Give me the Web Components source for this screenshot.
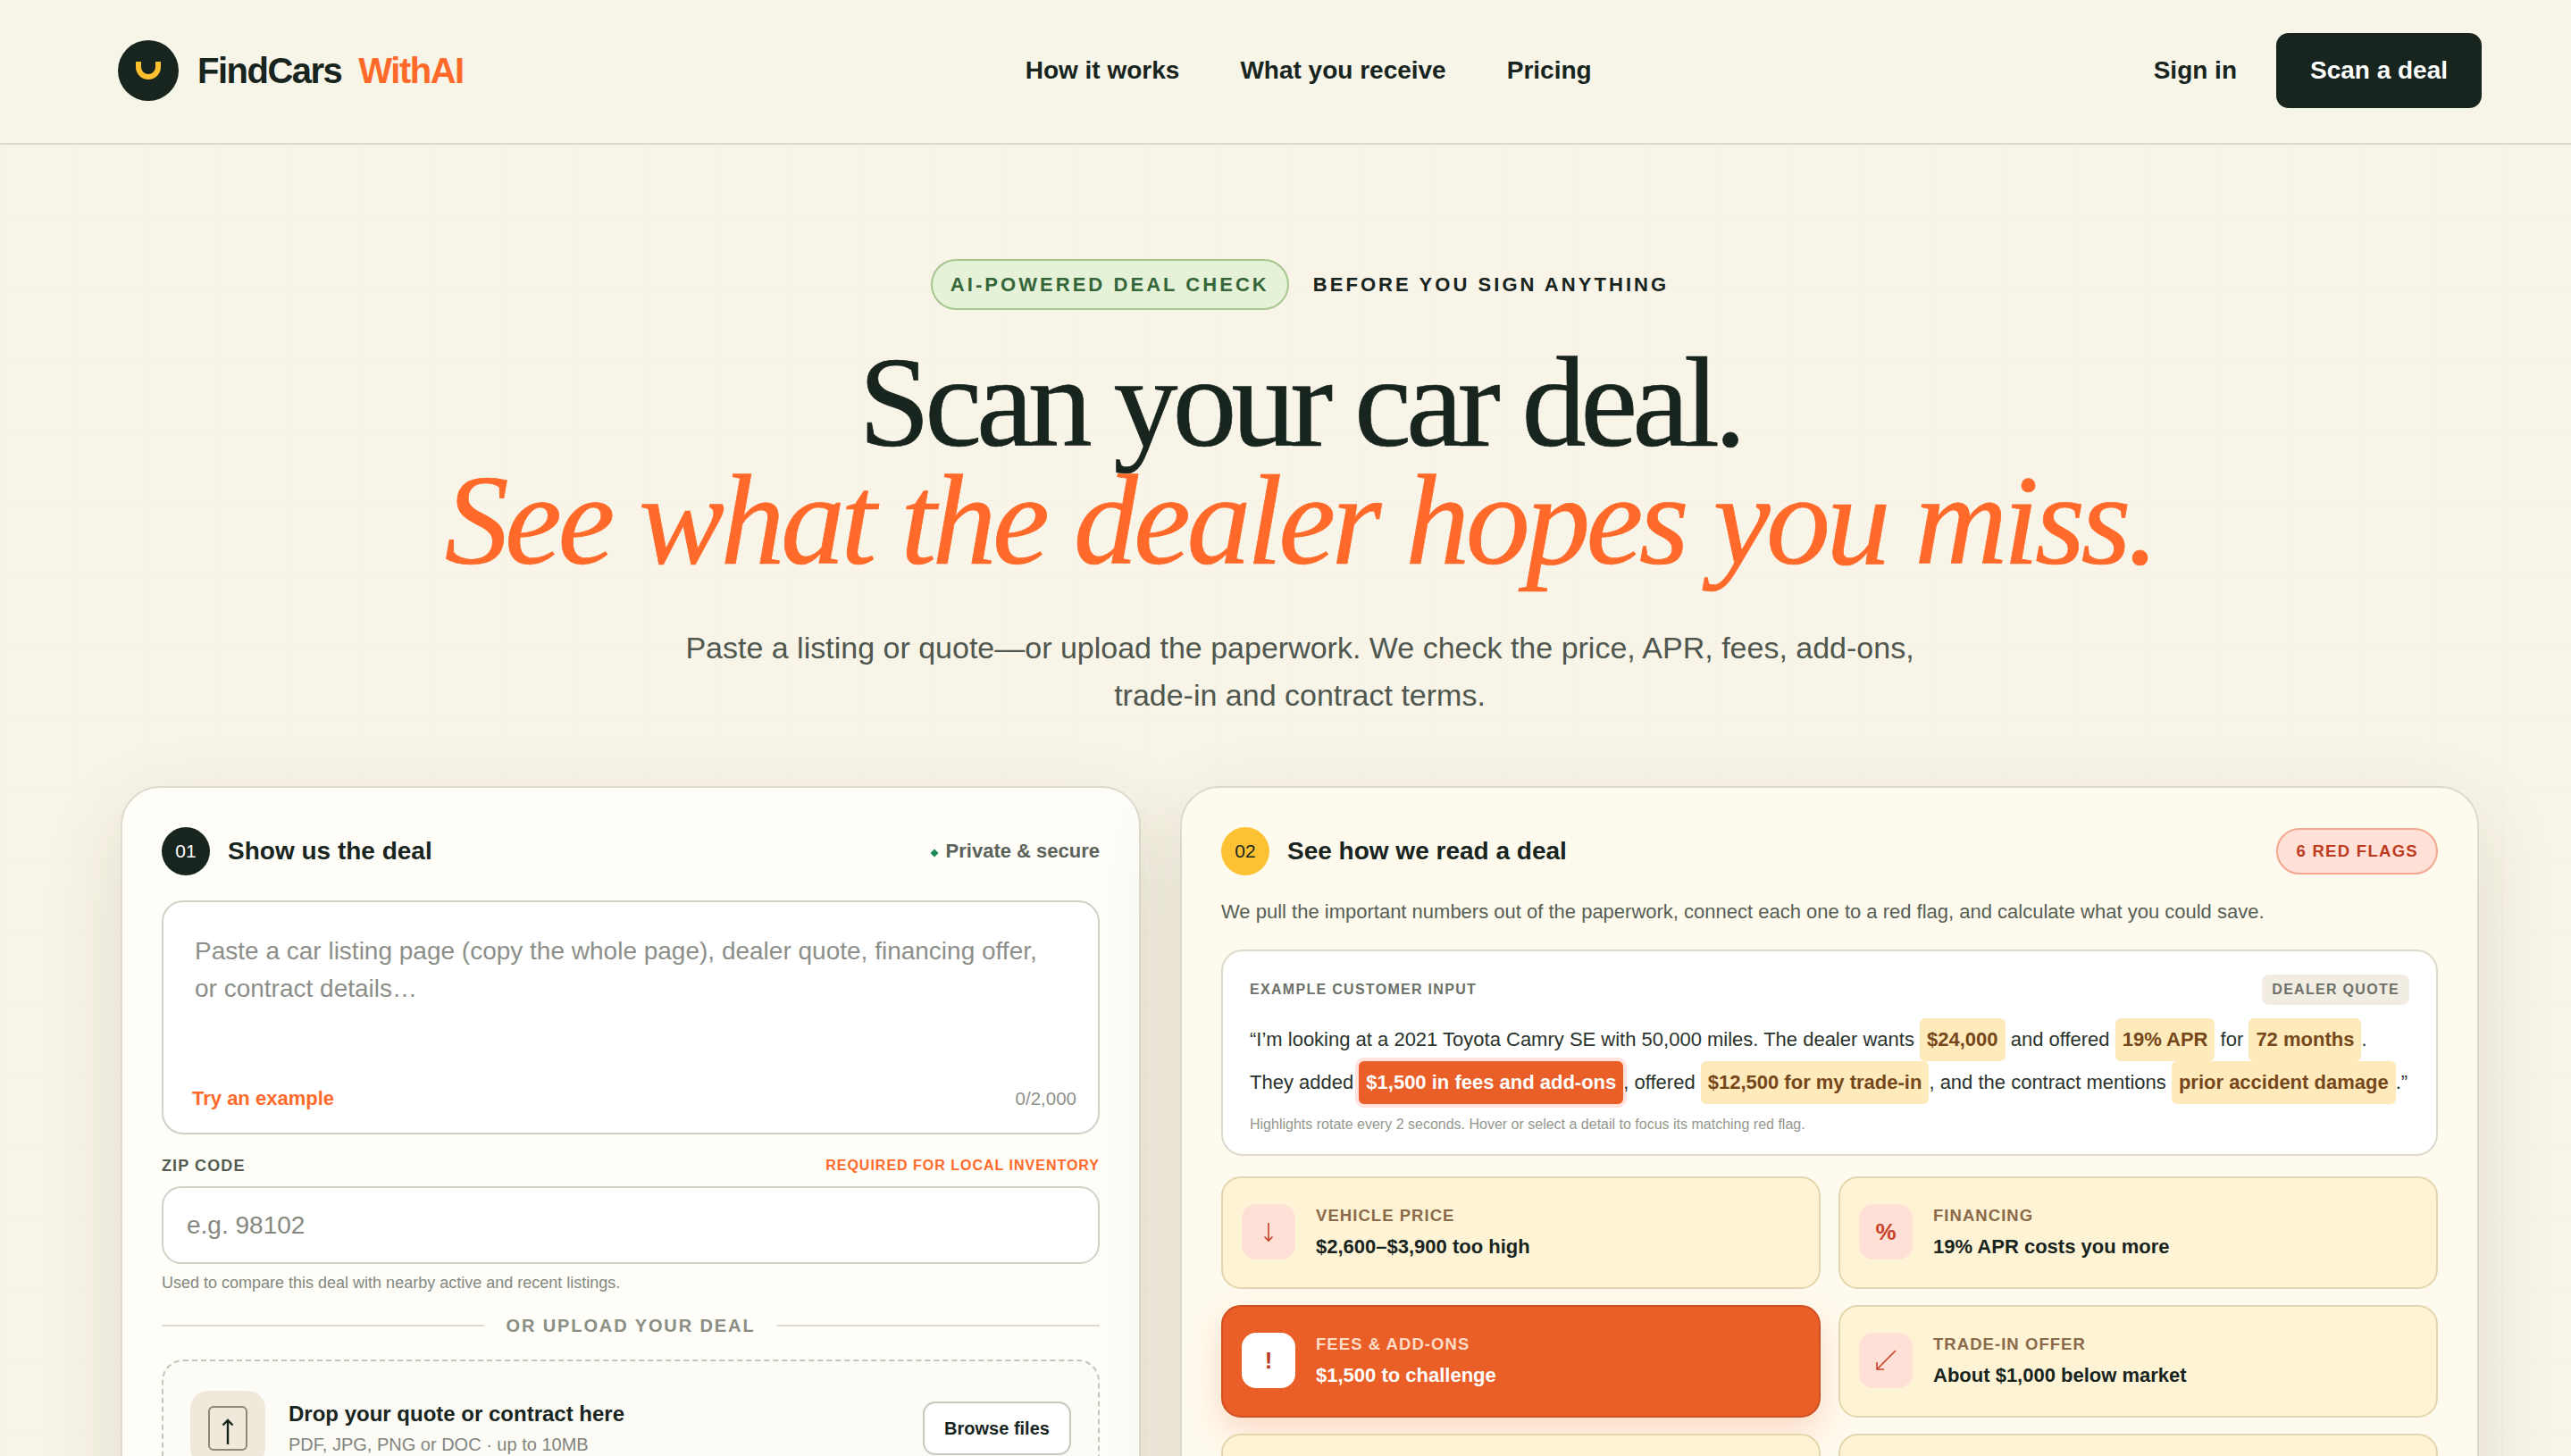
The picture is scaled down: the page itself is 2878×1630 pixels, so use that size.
<!DOCTYPE html>
<html lang="en">
<head>
<meta charset="utf-8">
<title>FindCars WithAI</title>
<style>
html, body { margin: 0; height: 1630px; overflow: hidden; }
body {
  font-family: "Liberation Sans", Arial, sans-serif;
  color: #18241e;
  background-color: #f8f4e8;
  background-image:
    linear-gradient(rgba(120,110,70,.012) 2px, transparent 2px),
    linear-gradient(90deg, rgba(120,110,70,.012) 2px, transparent 2px);
  background-size: 80px 80px;
}
</style>
</head>
<body>
<site-header></site-header>
<hero-intro></hero-intro>
<deal-columns>
  <deal-form></deal-form>
  <deal-reading></deal-reading>
</deal-columns>

<script>
const ACCENT = "#ff6a2b";

class SiteHeader extends HTMLElement {
  constructor() {
    super();
    this.attachShadow({ mode: "open" });
    this.shadowRoot.innerHTML = `<style>
:host { display: flex; box-sizing: border-box; height: 162px; padding: 0 100px 2px 132px; align-items: center; justify-content: space-between; border-bottom: 2px solid #dcd9cb; background: #f7f4e8; }
.logo { display: flex; align-items: center; font-size: 40px; font-weight: 700; letter-spacing: -1.5px; }
.logo svg { margin-right: 21px; }
.logo span { color: ${ACCENT}; margin-left: 19px; }
nav { display: flex; gap: 68px; font-size: 28px; font-weight: 700; }
.right { display: flex; align-items: center; gap: 44px; font-size: 28px; font-weight: 700; }
.cta { background: #18241e; color: #fff; width: 230px; height: 84px; border-radius: 14px; display: flex; align-items: center; justify-content: center; }
</style>
<div class="logo">
  <svg width="68" height="68" viewBox="0 0 68 68"><circle cx="34" cy="34" r="34" fill="#18241e"/><path d="M23 24v6a11 11 0 0 0 22 0v-6" fill="none" stroke="#fcc02e" stroke-width="6"/></svg>
  FindCars<span>WithAI</span>
</div>
<nav><div>How it works</div><div>What you receive</div><div>Pricing</div></nav>
<div class="right"><div>Sign in</div><div class="cta">Scan a deal</div></div>`;
  }
}

class HeroIntro extends HTMLElement {
  constructor() {
    super();
    this.attachShadow({ mode: "open" });
    this.shadowRoot.innerHTML = `<style>
:host { display: block; box-sizing: border-box; height: 718px; padding: 128px 100px 0 132px; text-align: center; }
.eyebrow { display: flex; justify-content: center; align-items: center; gap: 27px; font-size: 22px; font-weight: 700; letter-spacing: 3.05px; }
.pill { box-sizing: border-box; height: 57px; padding: 0 20px; border: 2px solid #a5c78f; border-radius: 29px; background: #e6f2d8; color: #35663a; display: flex; align-items: center; }
h1 { margin: 38px 0 0; font-family: "Liberation Serif", "Times New Roman", serif; font-weight: 400; font-size: 144px; line-height: 132px; letter-spacing: -6.1px; -webkit-text-stroke: .7px currentColor; }
h1 em { display: block; color: ${ACCENT}; letter-spacing: -4.6px; }
p { margin: 50px 0 0; font-size: 34px; line-height: 53px; color: #4f574f; }
</style>
<div class="eyebrow"><div class="pill">AI-POWERED DEAL CHECK</div><div>BEFORE YOU SIGN ANYTHING</div></div>
<h1>Scan your car deal.<em>See what the dealer hopes you miss.</em></h1>
<p>Paste a listing or quote—or upload the paperwork. We check the price, APR, fees, add-ons,<br>trade-in and contract terms.</p>`;
  }
}

class DealColumns extends HTMLElement {
  constructor() {
    super();
    this.attachShadow({ mode: "open" });
    this.shadowRoot.innerHTML = `<style>
:host { display: grid; grid-template-columns: 1142px 1454px; column-gap: 44px; padding-left: 135px; align-items: start; }
</style><slot></slot>`;
  }
}

class StepHead extends HTMLElement {
  constructor() {
    super();
    this.attachShadow({ mode: "open" });
    this.shadowRoot.innerHTML = `<style>
:host { display: flex; height: 54px; align-items: center; }
.num { box-sizing: border-box; width: 54px; height: 54px; border-radius: 50%; display: flex; align-items: center; justify-content: center; font-size: 21px; background: #18241e; color: #fff; margin-right: 20px; flex: none; }
:host([tone="yellow"]) .num { background: #fcc233; color: #18241e; }
.title { font-size: 28px; font-weight: 700; flex: 1; }
</style>
<div class="num"></div><div class="title"><slot></slot></div><slot name="aside"></slot>`;
  }
  connectedCallback() {
    this.shadowRoot.querySelector(".num").textContent = this.getAttribute("num");
  }
}

class DealForm extends HTMLElement {
  constructor() {
    super();
    this.attachShadow({ mode: "open" });
    this.shadowRoot.innerHTML = `<style>
:host { display: block; box-sizing: border-box; height: 900px; padding: 44px 44px 0; background: #fefdf8; border: 2px solid #dcdacd; border-radius: 44px; box-shadow: 0 30px 90px rgba(70,60,20,.13); }
.private { font-size: 22px; font-weight: 700; color: #5b625a; display: flex; align-items: center; gap: 9px; }
.private i { width: 8px; height: 8px; background: #1b8a57; transform: rotate(45deg) scale(.8); margin-top: 4px; }
.paste { box-sizing: border-box; height: 262px; margin-top: 28px; padding: 34px 34px 0 35px; background: #fff; border: 2px solid #d2d1c8; border-radius: 24px; display: flex; flex-direction: column; font-size: 28px; line-height: 42px; color: #8c8f89; }
.paste-foot { margin-top: auto; height: 52px; margin-left: -3px; margin-right: -10px; display: flex; justify-content: space-between; font-size: 22px; line-height: 28px; }
.paste-foot b { color: ${ACCENT}; }
.paste-foot span { font-size: 20.500px; color: #8f928b; }
.zip-row { display: flex; justify-content: space-between; align-items: center; margin-top: 24px; height: 22px; font-size: 18px; font-weight: 700; letter-spacing: 1.1px; color: #525a52; }
.zip-row span { color: ${ACCENT}; font-size: 16px; letter-spacing: 1px; }
.zip { box-sizing: border-box; height: 87px; margin-top: 12px; padding-left: 26px; background: #fff; border: 2px solid #d2d1c8; border-radius: 22px; display: flex; align-items: center; font-size: 28px; color: #85887f; }
.hint { margin-top: 9px; font-size: 18px; line-height: 24px; color: #84887f; }
.or { display: flex; align-items: center; gap: 24px; margin-top: 24px; height: 24px; font-size: 20px; font-weight: 700; letter-spacing: 1.9px; color: #8a8e84; white-space: nowrap; }
.or::before, .or::after { content: ""; flex: 1; height: 2px; background: #dddbd0; }
.drop { box-sizing: border-box; height: 160px; margin-top: 26px; padding: 33px 30px 0 30px; background: #fcfbf6; border: 2px dashed #c6c5bb; border-radius: 24px; display: flex; align-items: flex-start; }
.icon { flex: none; width: 84px; height: 84px; border-radius: 20px; background: #f0e8da; display: flex; align-items: center; justify-content: center; margin-right: 26px; }
.drop-text { flex: 1; padding-top: 10px; }
.drop-text b { display: block; font-size: 24px; line-height: 32px; }
.drop-text span { display: block; margin-top: 5px; font-size: 20px; line-height: 26px; color: #82857d; }
.browse { box-sizing: border-box; width: 166px; height: 60px; margin-top: 12px; background: #fff; border: 2px solid #c9c8c0; border-radius: 14px; display: flex; align-items: center; justify-content: center; font-size: 20px; font-weight: 700; color: #18241e; }
</style>
<step-head num="01">Show us the deal<div class="private" slot="aside"><i></i>Private &amp; secure</div></step-head>
<div class="paste">
  <div>Paste a car listing page (copy the whole page), dealer quote, financing offer,<br>or contract details…</div>
  <div class="paste-foot"><b>Try an example</b><span>0/2,000</span></div>
</div>
<div class="zip-row"><div>ZIP CODE</div><span>REQUIRED FOR LOCAL INVENTORY</span></div>
<div class="zip">e.g. 98102</div>
<div class="hint">Used to compare this deal with nearby active and recent listings.</div>
<div class="or">OR UPLOAD YOUR DEAL</div>
<div class="drop">
  <div class="icon">
    <svg width="44" height="50" viewBox="0 0 44 50" fill="none">
      <rect x="1" y="1" width="42" height="48" rx="5" stroke="#8e8676" stroke-width="2"/>
      <path d="M22 43V16M16.500 21.500L22 16l5.500 5.500" stroke="#18241e" stroke-width="2.400"/>
    </svg>
  </div>
  <div class="drop-text"><b>Drop your quote or contract here</b><span>PDF, JPG, PNG or DOC · up to 10MB</span></div>
  <div class="browse">Browse files</div>
</div>`;
  }
}

class FlagCard extends HTMLElement {
  constructor() {
    super();
    this.attachShadow({ mode: "open" });
    this.shadowRoot.innerHTML = `<style>
:host { display: flex; box-sizing: border-box; height: 126px; padding: 0 21px; align-items: center; gap: 23px; background: #fff3d6; border: 2px solid #e3d5ac; border-radius: 22px; }
:host([active]) { background: #ea5e27; border-color: #cf4f20; box-shadow: 0 16px 36px rgba(234,94,39,.2); }
.icon { flex: none; width: 60px; height: 62px; margin-top: -2px; border-radius: 16px; background: #ffe0d6; color: #c7422a; display: flex; align-items: center; justify-content: center; font-size: 26px; font-weight: 700; }
:host([active]) .icon { background: #fff; color: #b93a22; }
.label { font-size: 18.500px; font-weight: 700; letter-spacing: 1.05px; line-height: 22px; color: #8a6a48; }
:host([active]) .label { color: #ffdcc6; }
.value { margin-top: 10px; font-size: 22px; font-weight: 700; line-height: 28px; color: #18241e; }
:host([active]) .value { color: #fff; }
</style>
<div class="icon"><slot name="icon"></slot></div>
<div class="body">
  <div class="label"><slot name="label"></slot></div>
  <div class="value"><slot name="value"></slot></div>
</div>`;
  }
}

class DealReading extends HTMLElement {
  constructor() {
    super();
    this.attachShadow({ mode: "open" });
    this.shadowRoot.innerHTML = `<style>
:host { display: block; box-sizing: border-box; height: 1000px; padding: 44px 44px 0; background: #fffaee; border: 2px solid #dcdacd; border-radius: 44px; box-shadow: 0 30px 90px rgba(70,60,20,.13); }
.flags { box-sizing: border-box; height: 52px; padding: 0 20px; border: 2px solid #f2a78f; border-radius: 26px; background: #ffe1d7; color: #bd3b20; display: flex; align-items: center; font-size: 18.500px; font-weight: 700; letter-spacing: 1.3px; }
.lead { margin-top: 26px; font-size: 22px; line-height: 30px; color: #565e54; }
.sample { box-sizing: border-box; height: 231px; margin-top: 27px; padding: 26px 30px 0; background: #fff; border: 2px solid #dcdacd; border-radius: 24px; }
.sample-top { display: flex; justify-content: space-between; align-items: center; height: 34px; font-size: 16px; font-weight: 700; letter-spacing: 1.3px; color: #6c7067; }
.sample-top span { display: flex; align-items: center; height: 34px; padding: 0 11px; border-radius: 8px; background: #f1ede3; }
.quote { margin-top: 15px; font-size: 22px; line-height: 48px; white-space: nowrap; color: #2a332c; }
mark { display: inline-block; height: 48px; padding: 0 8px; background: #ffeabc; color: #75471a; font-weight: 700; border-radius: 6px; }
mark.on { background: #ea5e27; color: #fff; box-shadow: 0 0 0 4px #ffe3dc; }
.note { margin-top: 12px; font-size: 16px; line-height: 22px; color: #94978e; }
.grid { display: grid; grid-template-columns: 671px 671px; gap: 18px 20px; margin-top: 23px; }
svg { display: block; }
</style>
<step-head num="02" tone="yellow">See how we read a deal<div class="flags" slot="aside">6 RED FLAGS</div></step-head>
<div class="lead">We pull the important numbers out of the paperwork, connect each one to a red flag, and calculate what you could save.</div>
<div class="sample">
  <div class="sample-top"><div>EXAMPLE CUSTOMER INPUT</div><span>DEALER QUOTE</span></div>
  <div class="quote">“I’m looking at a 2021 Toyota Camry SE with 50,000 miles. The dealer wants <mark>$24,000</mark> and offered <mark>19% APR</mark> for <mark>72 months</mark>.<br>They added <mark class="on">$1,500 in fees and add-ons</mark>, offered <mark>$12,500 for my trade-in</mark>, and the contract mentions <mark>prior accident damage</mark>.”</div>
  <div class="note">Highlights rotate every 2 seconds. Hover or select a detail to focus its matching red flag.</div>
</div>
<div class="grid">
  <flag-card>
    <svg slot="icon" width="12" height="24" viewBox="0 0 12 24" fill="none" stroke="#c7422a" stroke-width="1.600"><path d="M6 2v20M1.500 17.500L6 22l4.500-4.500"/></svg>
    <span slot="label">VEHICLE PRICE</span><span slot="value">$2,600–$3,900 too high</span>
  </flag-card>
  <flag-card>
    <span slot="icon">%</span>
    <span slot="label">FINANCING</span><span slot="value">19% APR costs you more</span>
  </flag-card>
  <flag-card active>
    <span slot="icon">!</span>
    <span slot="label">FEES &amp; ADD-ONS</span><span slot="value">$1,500 to challenge</span>
  </flag-card>
  <flag-card>
    <svg slot="icon" width="24" height="24" viewBox="0 0 24 24" fill="none" stroke="#c7422a" stroke-width="1.600"><path d="M23 1L2 22M2 14v8h8"/></svg>
    <span slot="label">TRADE-IN OFFER</span><span slot="value">About $1,000 below market</span>
  </flag-card>
  <flag-card></flag-card>
  <flag-card></flag-card>
</div>`;
  }
}

customElements.define("site-header", SiteHeader);
customElements.define("hero-intro", HeroIntro);
customElements.define("deal-columns", DealColumns);
customElements.define("step-head", StepHead);
customElements.define("deal-form", DealForm);
customElements.define("flag-card", FlagCard);
customElements.define("deal-reading", DealReading);
</script>
</body>
</html>
